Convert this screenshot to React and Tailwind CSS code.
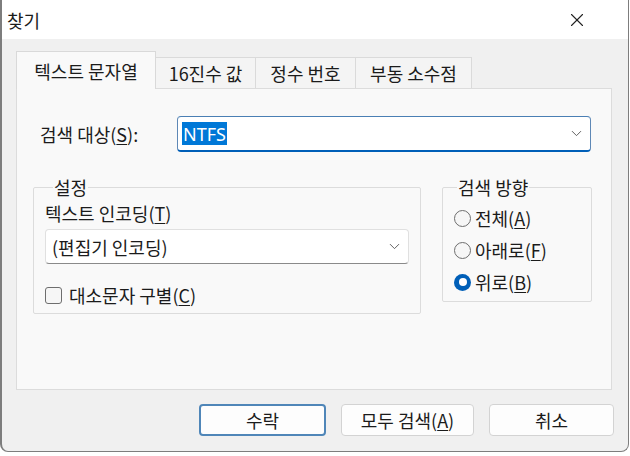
import { X, ChevronDown } from 'lucide-react';

const font = { fontFamily: '"Noto Sans CJK KR", "Noto Sans", sans-serif' };

const tabs = ['텍스트 문자열', '16진수 값', '정수 번호', '부동 소수점'];

const Key = ({ children }) => (
    <span className="underline underline-offset-2">{children}</span>
);

const Radio = ({ checked, children }) => (
    <label className="flex items-center gap-[4px] h-[32px]">
        {checked ? (
            <span className="w-[17px] h-[17px] rounded-full bg-[#005fb8] flex items-center justify-center">
                <span className="w-[8px] h-[8px] rounded-full bg-white" />
            </span>
        ) : (
            <span className="w-[17px] h-[17px] rounded-full border border-[#6e6e6e] bg-[#f6f6f6]" />
        )}
        <span>{children}</span>
    </label>
);

const App = () => {
    return (
        <div className="w-[630px] h-[456px] bg-white text-[18px] text-[#1b1b1b] leading-none" style={font}>
            <div className="w-[629px] h-[452px] border-l-2 border-r border-b border-[#7d7d7d] rounded-br-[8px] rounded-bl-[8px] bg-[#f0f0f0] flex flex-col overflow-hidden">
                {/* title bar */}
                <div className="h-[39px] bg-white flex items-center justify-between pl-[5px] pr-[40px]">
                    <span>찾기</span>
                    <X size={22} strokeWidth={1.2} className="text-[#222]" />
                </div>

                <div className="flex flex-col px-[14px]">
                    {/* tabs */}
                    <div className="flex items-end h-[49px] relative z-10">
                        {tabs.map((t, i) =>
                            i === 0 ? (
                                <div key={t} className="h-[38px] w-[140px] flex items-center justify-center bg-[#f9f9f9] border border-b-0 border-[#d9d9d9] -mb-px">
                                    {t}
                                </div>
                            ) : (
                                <div key={t} className={`h-[31px] flex items-center justify-center bg-[#f4f4f4] border border-b-0 border-l-0 border-[#dadada] ${i === 1 ? 'w-[100px]' : i === 2 ? 'w-[100px]' : 'w-[116px]'}`}>
                                    {t}
                                </div>
                            )
                        )}
                    </div>

                    {/* tab panel */}
                    <div className="h-[302px] w-[596px] bg-[#f9f9f9] border border-[#dcdcdc] pt-[27px]">
                        <div className="flex items-center h-[36px]">
                            <span className="w-[160px] pl-[23px]">검색 대상(<Key>S</Key>):</span>
                            <div className="w-[414px] h-[36px] bg-white border border-[#7a7a7a] border-b-2 border-b-[#005fb8] rounded-[4px] flex items-center justify-between pl-[4px] pr-[5px]" style={{ borderTopColor: '#4a7fb4', borderLeftColor: '#5e88b6', borderRightColor: '#5e88b6' }}>
                                <span className="bg-[#0078d7] text-white px-[1px] h-[23px] flex items-center text-[18px]" style={{ fontFamily: '"Noto Sans", sans-serif' }}>NTFS</span>
                                <ChevronDown size={17} strokeWidth={1.3} className="text-[#555]" />
                            </div>
                        </div>

                        <div className="flex gap-[21px] pl-[16px] mt-[26px]">
                            <fieldset className="w-[385px] h-[136px] border border-[#dcdcdc] rounded-[2px] px-[11px]">
                                <legend className="px-[1px] ml-[8px]">설정</legend>
                                <div className="mt-[8px]">텍스트 인코딩(<Key>T</Key>)</div>
                                <div className="mt-[7px] w-[364px] h-[35px] bg-white border border-[#e0e0e0] border-b-[#8a8a8a] rounded-[4px] flex items-center justify-between pl-[6px] pr-[5px]">
                                    <span>(편집기 인코딩)</span>
                                    <ChevronDown size={17} strokeWidth={1.3} className="text-[#555]" />
                                </div>
                                <label className="flex items-center gap-[7px] mt-[22px]">
                                    <span className="w-[17px] h-[17px] border border-[#6e6e6e] rounded-[3px] bg-[#f6f6f6]" />
                                    <span>대소문자 구별(<Key>C</Key>)</span>
                                </label>
                            </fieldset>

                            <fieldset className="w-[150px] h-[124px] border border-[#dcdcdc] rounded-[2px] px-[11px]">
                                <legend className="px-[1px] ml-[3px]">검색 방향</legend>
                                <div className="flex flex-col mt-[6px]">
                                    <Radio>전체(<Key>A</Key>)</Radio>
                                    <Radio>아래로(<Key>F</Key>)</Radio>
                                    <Radio checked>위로(<Key>B</Key>)</Radio>
                                </div>
                            </fieldset>
                        </div>
                    </div>

                    {/* buttons */}
                    <div className="flex justify-end gap-[15px] mt-[14px] pr-[0px]">
                        <button className="w-[127px] h-[32px] rounded-[4px] bg-[#fdfdfd] border-2 border-[#4f86b8]">수락</button>
                        <button className="w-[133px] h-[32px] rounded-[4px] bg-[#fdfdfd] border border-[#d3d3d3]">모두 검색(<Key>A</Key>)</button>
                        <button className="w-[125px] h-[32px] rounded-[4px] bg-[#fdfdfd] border border-[#d3d3d3]">취소</button>
                    </div>
                </div>
            </div>
        </div>
    );
};

export default App;
